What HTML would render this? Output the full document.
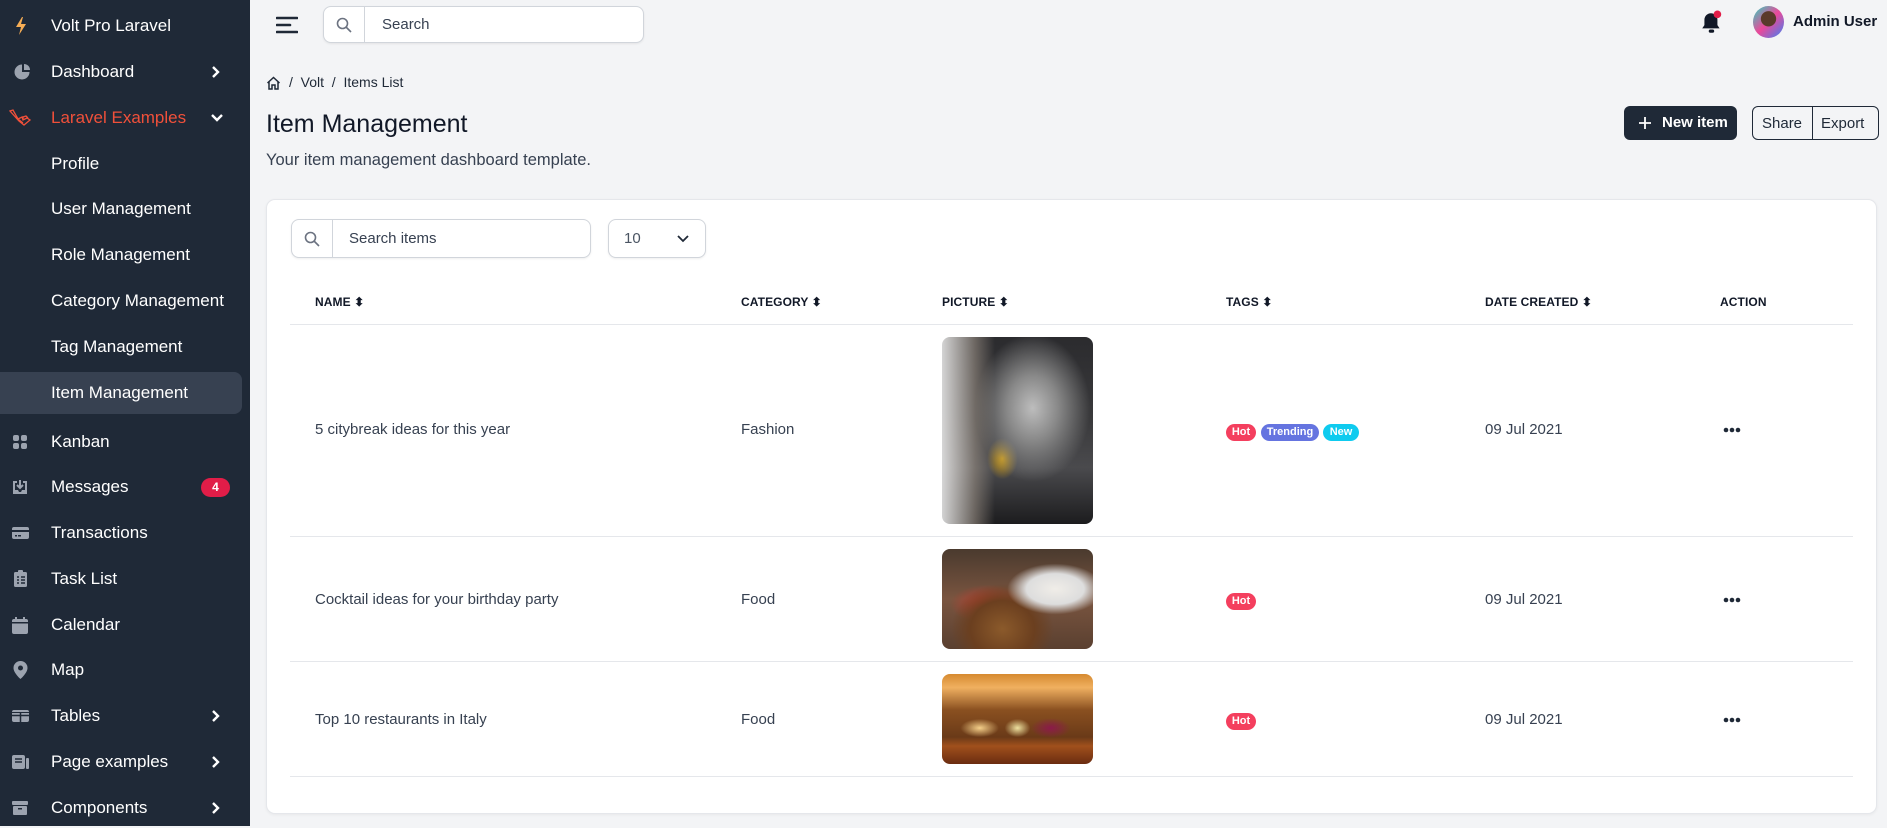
<!DOCTYPE html>
<html><head><meta charset="utf-8">
<style>
*{box-sizing:border-box;margin:0;padding:0}
body{width:1887px;height:826px;overflow:hidden;background:#f3f4f6;font-family:"Liberation Sans",Arial,sans-serif;position:relative;color:#1f2937}
.sb{position:absolute;left:0;top:0;width:250px;height:826px;background:#1f2937}
.it{position:absolute;left:0;width:250px;height:40px;display:flex;align-items:center;color:#fff;font-size:17px}
.it .tx{position:absolute;left:51px}
.it svg.ic{position:absolute;left:12px}
.it .ch{position:absolute;left:210px}
.act{position:absolute;left:0;top:372px;width:242px;height:42px;background:#374151;border-radius:0 8px 8px 0}
.badge{position:absolute;left:201px;background:#e11d48;color:#fff;font-size:12px;font-weight:bold;border-radius:10px;width:29px;height:19px;text-align:center;line-height:19px}
.abs{position:absolute}
.srch{position:absolute;border:1px solid #d1d5db;background:#fff;border-radius:8px;box-shadow:0 1px 2px rgba(0,0,0,.07)}
.th{position:absolute;top:295px;font-size:12px;font-weight:bold;color:#111827;letter-spacing:.1px}
.row{position:absolute;font-size:15px;color:#374151}
.line{position:absolute;left:290px;width:1563px;height:1px;background:#e5e7eb}
.tag{position:absolute;height:17px;border-radius:9px;color:#fff;font-size:11px;font-weight:bold;text-align:center;line-height:17px}
.img{position:absolute;left:942px;width:151px;border-radius:8px}
.dots{position:absolute;left:1723px}
</style></head><body>
<div class="sb">
<div class="act"></div>
<div class="it" style="top:6px"><svg class="ic" width="18" height="20" viewBox="0 0 18 20" style="left:12px"><path d="M10 1L4 11h5l-2 8 7-11H9l2-7z" fill="#f6ad55"/></svg><span class="tx">Volt Pro Laravel</span></div>
<div class="it" style="top:52px"><svg class="ic" width="18" height="18" viewBox="0 0 18 18" style="left:14px"><path d="M8 1.5A7.5 7.5 0 1 0 15.5 9H8z" fill="#9ca3af"/><path d="M10 1v6h6A6 6 0 0 0 10 1z" fill="#9ca3af"/></svg><span class="tx">Dashboard</span><svg class="ch" width="12" height="14" viewBox="0 0 12 14"><path d="M3 2l5 5-5 5" stroke="#fff" stroke-width="2.4" fill="none"/></svg></div>
<div class="it" style="top:98px;color:#f0503a"><svg class="ic" width="22" height="18" viewBox="0 0 22 18" style="left:9px"><path d="M1 2l3-1 5 9 4-2 1 3 4-2 3 2-6 5-5-4zM9 10l5 4M14 11v-3l3-1 2 2" stroke="#f0503a" stroke-width="1.3" fill="none"/></svg><span class="tx">Laravel Examples</span><svg class="ch" width="14" height="12" viewBox="0 0 14 12"><path d="M2 3l5 5 5-5" stroke="#fff" stroke-width="2.4" fill="none"/></svg></div>
<div class="it" style="top:144px"><span class="tx">Profile</span></div>
<div class="it" style="top:189px"><span class="tx">User Management</span></div>
<div class="it" style="top:235px"><span class="tx">Role Management</span></div>
<div class="it" style="top:281px"><span class="tx">Category Management</span></div>
<div class="it" style="top:327px"><span class="tx">Tag Management</span></div>
<div class="it" style="top:373px"><span class="tx">Item Management</span></div>
<div class="it" style="top:422px"><svg class="ic" width="16" height="16" viewBox="0 0 16 16" style="left:12px"><rect x="1" y="1" width="6" height="6" rx="2" fill="#9ca3af"/><rect x="9" y="1" width="6" height="6" rx="2" fill="#9ca3af"/><rect x="1" y="9" width="6" height="6" rx="2" fill="#9ca3af"/><rect x="9" y="9" width="6" height="6" rx="2" fill="#9ca3af"/></svg><span class="tx">Kanban</span></div>
<div class="it" style="top:467px"><svg class="ic" width="16" height="16" viewBox="0 0 16 16" style="left:12px"><path d="M1 2h4v2H3v7h3l1 2h2l1-2h3V4h-2V2h4v13H1z" fill="#9ca3af"/><path d="M8 1v7M5 6l3 3 3-3" stroke="#9ca3af" stroke-width="2" fill="none"/></svg><span class="tx">Messages</span><span class="badge">4</span></div>
<div class="it" style="top:513px"><svg class="ic" width="18" height="14" viewBox="0 0 18 14" style="left:12px"><rect x="0" y="1" width="17" height="12" rx="2" fill="#9ca3af"/><rect x="0" y="4" width="17" height="2" fill="#1f2937"/><rect x="3" y="9" width="2" height="1.5" fill="#1f2937"/><rect x="6" y="9" width="3" height="1.5" fill="#1f2937"/></svg><span class="tx">Transactions</span></div>
<div class="it" style="top:559px"><svg class="ic" width="16" height="18" viewBox="0 0 16 18" style="left:13px"><rect x="1" y="2" width="13" height="15" rx="1.5" fill="#9ca3af"/><rect x="5" y="0" width="5" height="3" rx="1" fill="#9ca3af"/><path d="M4 7h2M8 7h4M4 10h2M8 10h4M4 13h2M8 13h4" stroke="#1f2937" stroke-width="1.5"/></svg><span class="tx">Task List</span></div>
<div class="it" style="top:605px"><svg class="ic" width="17" height="17" viewBox="0 0 17 17" style="left:12px"><rect x="0" y="2" width="16" height="15" rx="2" fill="#9ca3af"/><rect x="3" y="0" width="2" height="4" fill="#9ca3af"/><rect x="11" y="0" width="2" height="4" fill="#9ca3af"/><rect x="0" y="5" width="16" height="1.5" fill="#1f2937"/></svg><span class="tx">Calendar</span></div>
<div class="it" style="top:650px"><svg class="ic" width="16" height="18" viewBox="0 0 16 18" style="left:13px"><path d="M7.5 0A7 7 0 0 0 .5 7c0 5 7 11 7 11s7-6 7-11a7 7 0 0 0-7-7z" fill="#9ca3af"/><circle cx="7.5" cy="7" r="2.5" fill="#1f2937"/></svg><span class="tx">Map</span></div>
<div class="it" style="top:696px"><svg class="ic" width="18" height="14" viewBox="0 0 18 14" style="left:12px"><rect x="0" y="1" width="17" height="12" rx="2" fill="#9ca3af"/><path d="M0 6.5h17M8.5 4v9" stroke="#1f2937" stroke-width="1.5"/><rect x="0" y="3" width="17" height="1" fill="#1f2937"/></svg><span class="tx">Tables</span><svg class="ch" width="12" height="14" viewBox="0 0 12 14"><path d="M3 2l5 5-5 5" stroke="#fff" stroke-width="2.4" fill="none"/></svg></div>
<div class="it" style="top:742px"><svg class="ic" width="18" height="16" viewBox="0 0 18 16" style="left:12px"><rect x="0" y="1" width="13" height="14" rx="2" fill="#9ca3af"/><rect x="14" y="4" width="3" height="11" rx="1" fill="#9ca3af"/><path d="M3 5h7M3 8h7" stroke="#1f2937" stroke-width="1.5"/></svg><span class="tx">Page examples</span><svg class="ch" width="12" height="14" viewBox="0 0 12 14"><path d="M3 2l5 5-5 5" stroke="#fff" stroke-width="2.4" fill="none"/></svg></div>
<div class="it" style="top:788px"><svg class="ic" width="17" height="16" viewBox="0 0 17 16" style="left:12px"><rect x="0" y="1" width="16" height="4" rx="1" fill="#9ca3af"/><rect x="1" y="6" width="14" height="9" rx="1" fill="#9ca3af"/><rect x="6" y="8" width="4" height="1.5" fill="#1f2937"/></svg><span class="tx">Components</span><svg class="ch" width="12" height="14" viewBox="0 0 12 14"><path d="M3 2l5 5-5 5" stroke="#fff" stroke-width="2.4" fill="none"/></svg></div>
</div>

<svg class="abs" style="left:276px;top:15px" width="22" height="20" viewBox="0 0 22 20"><path d="M1 3h20M1 10h13M1 17h20" stroke="#1f2937" stroke-width="2.6" stroke-linecap="round"/></svg>
<div class="srch" style="left:323px;top:6px;width:321px;height:37px"><div class="abs" style="left:40px;top:0;width:1px;height:35px;background:#d1d5db"></div><svg class="abs" style="left:12px;top:10px" width="16" height="16" viewBox="0 0 16 16"><circle cx="6.5" cy="6.5" r="5" stroke="#6b7280" stroke-width="1.6" fill="none"/><path d="M10 10l5 5" stroke="#6b7280" stroke-width="1.6"/></svg><span class="abs" style="left:58px;top:9px;font-size:15px;color:#374151">Search</span></div>
<svg class="abs" style="left:1700px;top:10px" width="24" height="26" viewBox="0 0 20 24"><path d="M9 3a6 6 0 0 0-6 6v5l-2 3h16l-2-3V9a6 6 0 0 0-6-6z" fill="#111827"/><rect x="7" y="18" width="5" height="3" rx="1.5" fill="#111827"/><circle cx="15" cy="4" r="3.5" fill="#e11d48"/></svg>
<div class="abs" style="left:1753px;top:6px;width:31px;height:32px;border-radius:50%;background:radial-gradient(circle at 50% 40%,#5a3a2a 0 30%,transparent 32%),linear-gradient(135deg,#2dd4bf,#ec4899 50%,#3b82f6)"></div>
<span class="abs" style="left:1793px;top:13px;font-size:15px;font-weight:bold;color:#111827">Admin User</span>

<svg class="abs" style="left:266px;top:76px" width="15" height="14" viewBox="0 0 15 14"><path d="M1.5 7L7.5 1.5 13.5 7M3 5.5V13h3V9h3v4h3V5.5" stroke="#1f2937" stroke-width="1.5" fill="none"/></svg>
<span class="abs" style="left:289px;top:74px;font-size:14px;color:#1f2937">/&nbsp;&nbsp;Volt&nbsp;&nbsp;/&nbsp;&nbsp;Items List</span>
<span class="abs" style="left:266px;top:110px;font-size:25px;color:#111827">Item Management</span>
<span class="abs" style="left:266px;top:151px;font-size:16.5px;color:#374151">Your item management dashboard template.</span>
<div class="abs" style="left:1624px;top:106px;width:113px;height:34px;background:#1f2937;border-radius:6px;color:#fff;font-size:15px;font-weight:bold"><svg class="abs" style="left:14px;top:10px" width="14" height="14" viewBox="0 0 14 14"><path d="M7 1v12M1 7h12" stroke="#fff" stroke-width="1.8"/></svg><span class="abs" style="left:38px;top:8px">New item</span></div>
<div class="abs" style="left:1752px;top:106px;width:127px;height:34px;border:1px solid #1f2937;border-radius:6px;font-size:15px;color:#1f2937"><span class="abs" style="left:9px;top:8px">Share</span><div class="abs" style="left:59px;top:0;width:1px;height:32px;background:#1f2937"></div><span class="abs" style="left:68px;top:8px">Export</span></div>

<div class="abs" style="left:266px;top:199px;width:1611px;height:615px;background:#fff;border-radius:9px;border:1px solid #e5e7eb;box-shadow:0 1px 3px rgba(0,0,0,.05)"></div>
<div class="srch" style="left:291px;top:219px;width:300px;height:39px"><div class="abs" style="left:40px;top:0;width:1px;height:37px;background:#d1d5db"></div><svg class="abs" style="left:12px;top:11px" width="16" height="16" viewBox="0 0 16 16"><circle cx="6.5" cy="6.5" r="5" stroke="#6b7280" stroke-width="1.6" fill="none"/><path d="M10 10l5 5" stroke="#6b7280" stroke-width="1.6"/></svg><span class="abs" style="left:57px;top:10px;font-size:15px;color:#374151">Search items</span></div>
<div class="srch" style="left:608px;top:219px;width:98px;height:39px"><span class="abs" style="left:15px;top:10px;font-size:15px;color:#4b5563">10</span><svg class="abs" style="left:67px;top:14px" width="14" height="10" viewBox="0 0 14 10"><path d="M2 2l5 5 5-5" stroke="#1f2937" stroke-width="1.8" fill="none"/></svg></div>

<div class="th" style="left:315px">NAME &#x2B0D;</div>
<div class="th" style="left:741px">CATEGORY &#x2B0D;</div>
<div class="th" style="left:942px">PICTURE &#x2B0D;</div>
<div class="th" style="left:1226px">TAGS &#x2B0D;</div>
<div class="th" style="left:1485px">DATE CREATED &#x2B0D;</div>
<div class="th" style="left:1720px">ACTION</div>
<div class="line" style="top:324px"></div>
<div class="line" style="top:536px"></div>
<div class="line" style="top:661px"></div>
<div class="line" style="top:776px"></div>

<div class="img" style="top:337px;height:187px;background:linear-gradient(90deg,rgba(230,230,230,.9) 0,rgba(150,140,130,.6) 22%,transparent 35%),radial-gradient(ellipse at 60% 38%,#bdbdbd 0,#888 20%,transparent 45%),radial-gradient(ellipse at 40% 65%,#d4a017 0,transparent 12%),linear-gradient(180deg,#2b2b2e 0,#3a3a3c 45%,#4a4a4d 70%,#1c1c1e 100%)"></div>
<div class="img" style="top:549px;height:100px;background:radial-gradient(ellipse at 75% 40%,#f0ede8 0,#ddd 18%,transparent 30%),radial-gradient(ellipse at 40% 80%,#8b5a2b 0,#6b3f1f 25%,transparent 40%),radial-gradient(ellipse at 30% 55%,#c0392b 0,transparent 25%),linear-gradient(180deg,#4a3a2e 0,#7a5540 50%,#5a4030 100%)"></div>
<div class="img" style="top:674px;height:90px;background:radial-gradient(ellipse at 25% 60%,#f5d08a 0,transparent 12%),radial-gradient(ellipse at 50% 60%,#eee2a0 0,transparent 12%),radial-gradient(ellipse at 72% 60%,#8b1a4a 0,transparent 13%),linear-gradient(180deg,#d68a30 0,#f0b060 15%,#8a5020 40%,#6a3a18 70%,#a0501c 80%,#6a2c10 100%)"></div>

<div class="row" style="left:315px;top:421px">5 citybreak ideas for this year</div>
<div class="row" style="left:741px;top:421px">Fashion</div>
<div class="tag" style="left:1226px;top:424px;width:30px;background:#f43f5e">Hot</div>
<div class="tag" style="left:1261px;top:424px;width:58px;background:#6574e0">Trending</div>
<div class="tag" style="left:1323px;top:424px;width:36px;background:#0fcbef">New</div>
<div class="row" style="left:1485px;top:421px">09 Jul 2021</div>
<svg class="dots" style="top:427px" width="18" height="6" viewBox="0 0 18 6"><circle cx="3" cy="3" r="2.3" fill="#1f2937"/><circle cx="9" cy="3" r="2.3" fill="#1f2937"/><circle cx="15" cy="3" r="2.3" fill="#1f2937"/></svg>

<div class="row" style="left:315px;top:591px">Cocktail ideas for your birthday party</div>
<div class="row" style="left:741px;top:591px">Food</div>
<div class="tag" style="left:1226px;top:593px;width:30px;background:#f43f5e">Hot</div>
<div class="row" style="left:1485px;top:591px">09 Jul 2021</div>
<svg class="dots" style="top:597px" width="18" height="6" viewBox="0 0 18 6"><circle cx="3" cy="3" r="2.3" fill="#1f2937"/><circle cx="9" cy="3" r="2.3" fill="#1f2937"/><circle cx="15" cy="3" r="2.3" fill="#1f2937"/></svg>

<div class="row" style="left:315px;top:711px">Top 10 restaurants in Italy</div>
<div class="row" style="left:741px;top:711px">Food</div>
<div class="tag" style="left:1226px;top:713px;width:30px;background:#f43f5e">Hot</div>
<div class="row" style="left:1485px;top:711px">09 Jul 2021</div>
<svg class="dots" style="top:717px" width="18" height="6" viewBox="0 0 18 6"><circle cx="3" cy="3" r="2.3" fill="#1f2937"/><circle cx="9" cy="3" r="2.3" fill="#1f2937"/><circle cx="15" cy="3" r="2.3" fill="#1f2937"/></svg>
</body></html>
